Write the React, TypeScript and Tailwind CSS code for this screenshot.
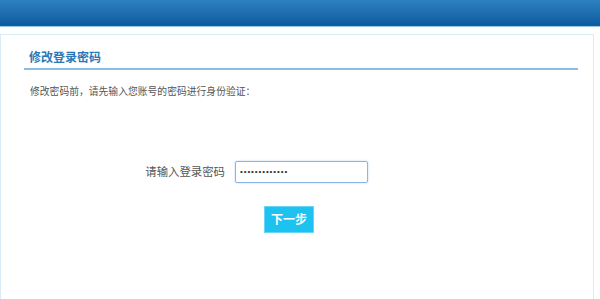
export default function App() {
  const font = { fontFamily: '"Noto Sans CJK SC", "Liberation Sans", sans-serif' }

  return (
    <div className="w-[600px] h-[299px] overflow-hidden bg-white" style={font}>
      {/* top bar */}
      <div className="h-[27px] bg-gradient-to-b from-[#2d80c0] to-[#0c5c9e] border-b border-[#9cc7e6]" />

      <div className="mt-[7px] w-[594px] h-[280px] border border-[#d8ecf8] border-b-0">
        <div className="pl-[28px] pt-[13px] h-[33px] text-[12px] font-bold text-[#2a78b8] leading-[18px]">
          修改登录密码
        </div>
        <div className="ml-[23px] w-[554px] h-[2px] bg-[#8dbbe0]" />

        <p className="pl-[29px] mt-[15px] text-[9.8px] leading-[12px] text-[#555]">
          修改密码前，请先输入您账号的密码进行身份验证：
        </p>

        <div className="mt-[64px] flex items-center">
          <label className="w-[224px] text-right text-[11.4px] text-[#555]">请输入登录密码</label>
          <div className="ml-[10px] w-[133px] h-[22px] border border-[#8db4ea] rounded-[2px] shadow-[0_0_2px_#a9c8f2] flex items-center pl-[4px]">
            <span
              className="text-[8px] tracking-[0.9px] text-[#333] leading-none"
              style={{ fontFamily: '"Liberation Sans", sans-serif' }}
            >
              •••••••••••••
            </span>
          </div>
        </div>

        <div className="mt-[22px] pl-[263px]">
          <button className="w-[50px] h-[27px] bg-[#1ec2f0] border border-[#6ad6f5] text-white text-[12px] font-bold leading-none">
            下一步
          </button>
        </div>
      </div>
    </div>
  )
}
